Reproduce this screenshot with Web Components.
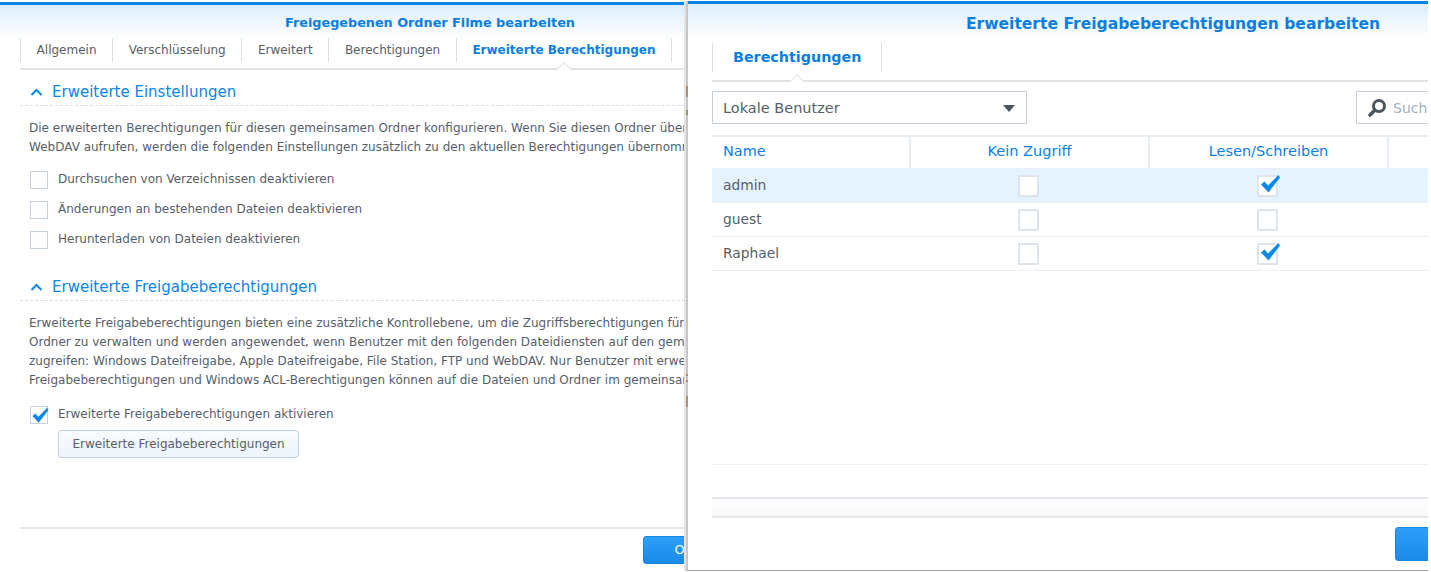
<!DOCTYPE html>
<html lang="de">
<head>
<meta charset="utf-8">
<title>Freigabeberechtigungen</title>
<style>
  html, body { margin: 0; height: 100%; background: #fff; overflow: hidden; }
  body { font: 12px/19px "DejaVu Sans", sans-serif; color: #56606a; }
</style>
</head>
<body>

<dsm-desktop>
  <dsm-window style="--left:0px;--top:2px;--width:860px;--height:570px;--pad:20px;--title-size:12.8px;--title-h:36px;--edge:0px;--title-line:36px;--bottom:0px;--ring:0px" caption="Freigegebenen Ordner Filme bearbeiten">
    <dsm-tabs>
      <dsm-tab>Allgemein</dsm-tab>
      <dsm-tab>Verschlüsselung</dsm-tab>
      <dsm-tab>Erweitert</dsm-tab>
      <dsm-tab>Berechtigungen</dsm-tab>
      <dsm-tab active>Erweiterte Berechtigungen</dsm-tab>
    </dsm-tabs>
    <dsm-section caption="Erweiterte Einstellungen" style="--section-top:9px;--text-gap:8px">
      <p>Die erweiterten Berechtigungen für diesen gemeinsamen Ordner konfigurieren. Wenn Sie diesen Ordner über File Station, FTP oder<br>WebDAV aufrufen, werden die folgenden Einstellungen zusätzlich zu den aktuellen Berechtigungen übernommen.</p>
      <dsm-check>Durchsuchen von Verzeichnissen deaktivieren</dsm-check>
      <dsm-check>Änderungen an bestehenden Dateien deaktivieren</dsm-check>
      <dsm-check>Herunterladen von Dateien deaktivieren</dsm-check>
    </dsm-section>
    <dsm-section caption="Erweiterte Freigabeberechtigungen" style="--section-top:19px;--text-gap:10px">
      <p>Erweiterte Freigabeberechtigungen bieten eine zusätzliche Kontrollebene, um die Zugriffsberechtigungen für<br>Ordner zu verwalten und werden angewendet, wenn Benutzer mit den folgenden Dateidiensten auf den gemeinsamen<br>zugreifen: Windows Dateifreigabe, Apple Dateifreigabe, File Station, FTP und WebDAV. Nur Benutzer mit erweiterten<br>Freigabeberechtigungen und Windows ACL-Berechtigungen können auf die Dateien und Ordner im gemeinsamen</p>
      <dsm-check checked>Erweiterte Freigabeberechtigungen aktivieren</dsm-check>
      <dsm-button>Erweiterte Freigabeberechtigungen</dsm-button>
    </dsm-section>
    <dsm-footer slot="footer" style="--footer-left:643px;--bar-h:43px;--bar-pad:7px;--ok-h:28px;--ok-w:82px">OK</dsm-footer>
  </dsm-window>

  <dsm-window style="--left:686px;--top:1px;--width:972px;--height:570px;--pad:24px;--title-size:15.55px;--title-h:37px;--edge:2px;--title-line:40px;--bottom:1px;--ring:2px" caption="Erweiterte Freigabeberechtigungen bearbeiten">
    <dsm-tabs large>
      <dsm-tab active>Berechtigungen</dsm-tab>
    </dsm-tabs>
    <dsm-toolbar>
      <dsm-select>Lokale Benutzer</dsm-select>
      <dsm-search>Suchen</dsm-search>
    </dsm-toolbar>
    <dsm-grid>
      <dsm-row head><span>Name</span><span>Kein Zugriff</span><span>Lesen/Schreiben</span><span></span></dsm-row>
      <dsm-row selected><span>admin</span><dsm-box></dsm-box><dsm-box checked></dsm-box><span></span></dsm-row>
      <dsm-row><span>guest</span><dsm-box></dsm-box><dsm-box></dsm-box><span></span></dsm-row>
      <dsm-row><span>Raphael</span><dsm-box></dsm-box><dsm-box checked></dsm-box><span></span></dsm-row>
    </dsm-grid>
    <dsm-pager></dsm-pager>
    <dsm-footer slot="footer" style="--footer-left:707px;--bar-h:52px;--bar-pad:9px;--ok-h:34px;--ok-w:92px">OK</dsm-footer>
  </dsm-window>

  <!-- bits of the wallpaper showing through the gap between the windows -->
  <dsm-speck style="--y:86px;--h:11px"></dsm-speck>
  <dsm-speck style="--y:110px;--h:5px;--c:#9b8f7c"></dsm-speck>
  <dsm-speck style="--y:374px;--h:2px"></dsm-speck>
  <dsm-speck style="--y:380px;--h:2px"></dsm-speck>
  <dsm-speck style="--y:396px;--h:11px"></dsm-speck>
</dsm-desktop>

<script>
  const CHECK_MARK = `<svg viewBox="0 0 22 20" width="100%" height="100%"><path d="M2 10.5 L5.5 7.5 L9 11.5 L19.5 1 L21 3.5 L9.5 18.5 Z" fill="#0a8ae8"/></svg>`;

  function define(name, css, html) {
    customElements.define(name, class extends HTMLElement {
      connectedCallback() {
        if (this.shadowRoot) return;
        this.attachShadow({ mode: "open" });
        this.shadowRoot.innerHTML = `<style>${css}</style>${typeof html === "function" ? html(this) : html}`;
      }
    });
  }

  define("dsm-desktop", `
    :host { display: block; position: relative; width: 1428px; height: 572px; overflow: hidden; background: #fff; }
  `, `<slot></slot>`);

  define("dsm-speck", `
    :host { position: absolute; left: 686px; top: var(--y); width: 2px; height: var(--h); background: var(--c, #b08f75); }
  `, ``);

  // overlapping windows, place is the content here
  define("dsm-window", `
    :host {
      display: flex; flex-direction: column; box-sizing: border-box;
      position: absolute; left: var(--left); top: var(--top);
      width: var(--width); height: var(--height);
      background: #fff;
      border-left: var(--edge) solid #c6c6c6;
      border-bottom: var(--bottom) solid #a8a8a8;
      box-shadow: calc(var(--ring) * -1) 0 0 #e4e4e4;
    }
    .top {
      flex: none; box-sizing: border-box; height: var(--title-h);
      border-top: 3px solid #0a84e6;
      background: linear-gradient(#dcedfb, #fff);
      text-align: center;
      font-weight: bold; font-size: var(--title-size); line-height: var(--title-line); color: #0a7fe0;
    }
    .body { flex: 1; min-height: 0; padding: 0 var(--pad); white-space: nowrap; overflow: hidden; }
  `, el => `
    <div class="top">${el.getAttribute("caption")}</div>
    <div class="body"><slot></slot></div>
    <slot name="footer"></slot>
  `);

  define("dsm-tabs", `
    :host { display: flex; box-sizing: border-box; height: 32px; padding-bottom: 6px; border-bottom: 2px solid #e3e3e3; --tab-pad: 15.6px; --tip-top: 2px; }
    :host([large]) { height: 44px; padding: 5px 0 8px; font-size: 14.3px; --tab-pad: 20px; --tip-top: 4px; }
  `, `<slot></slot>`);

  define("dsm-tab", `
    :host {
      display: flex; align-items: center; position: relative; box-sizing: border-box;
      padding: 0 var(--tab-pad);
      color: #56606a;
      border-left: 1px solid #d7e0e9;
    }
    :host(:last-child) { border-right: 1px solid #d7e0e9; }
    :host([active]) { color: #0a7fe0; font-weight: bold; }
    .tip { display: none; position: absolute; left: 50%; top: calc(100% + var(--tip-top)); width: 9px; height: 9px; margin-left: -5px;
      background: #fff; border: solid #e3e3e3; border-width: 1px 0 0 1px; transform: rotate(45deg); }
    :host([active]) .tip { display: block; }
  `, `<slot></slot><i class="tip"></i>`);

  define("dsm-section", `
    :host { display: block; padding-top: var(--section-top, 10px); }
    .head { display: flex; align-items: center; gap: 9px; height: 26px; border-bottom: 1px dashed #d7dfe7;
      padding-left: 10px; font-size: 15px; color: #0a86e8; }
    .body { padding: 13px 0 0 9px; }
    ::slotted(p) { margin: 0 0 var(--text-gap); }
  `, el => `
    <div class="head"><svg width="13" height="8" viewBox="0 0 13 8"><path d="M1.5 7 L6.5 2 L11.5 7" fill="none" stroke="#0a86e8" stroke-width="2"/></svg>${el.getAttribute("caption")}</div>
    <div class="body"><slot></slot></div>
  `);

  define("dsm-box", `
    :host { display: flex; align-items: center; justify-content: center; padding-top: 1px; }
    .b { position: relative; box-sizing: border-box; width: 21px; height: 22px; border: 2px solid #dde4eb; background: #fff; }
    svg { position: absolute; left: 0; top: -3px; width: 22px; height: 20px; }
  `, el => `<div class="b">${el.hasAttribute("checked") ? CHECK_MARK : ""}</div>`);

  define("dsm-check", `
    :host { display: flex; align-items: center; gap: 10px; height: 30px; margin-left: 1px; }
    .b { position: relative; box-sizing: border-box; width: 18px; height: 18px; border: 1px solid #c6d3df; background: #fff; flex: none; }
    svg { position: absolute; left: -1px; top: 0; width: 20px; height: 17px; }
    span { margin-top: -2px; }
  `, el => `<div class="b">${el.hasAttribute("checked") ? CHECK_MARK : ""}</div><span><slot></slot></span>`);

  define("dsm-button", `
    :host { display: inline-block; margin: 0 0 0 29px; padding: 0 13.5px; height: 28px; line-height: 26px; box-sizing: border-box;
      border: 1px solid #c5d0dc; border-radius: 3px; background: linear-gradient(#f8fbfe, #eef4fb); }
  `, `<slot></slot>`);

  define("dsm-footer", `
    :host { display: block; flex: none; }
    .line { height: 2px; background: #e6e6e6; margin: 0 var(--pad); }
    .bar { height: var(--bar-h); padding: var(--bar-pad) 0 0 var(--footer-left); box-sizing: border-box; }
    .ok { width: var(--ok-w); height: var(--ok-h); box-sizing: border-box; border: 1px solid #1a85e0; border-radius: 3px;
      background: linear-gradient(#2d9ffa, #1a8be8); color: #fff; text-align: center; line-height: calc(var(--ok-h) - 2px); font-size: 13px; }
  `, `<div class="line"></div><div class="bar"><div class="ok"><slot></slot></div></div>`);

  define("dsm-toolbar", `
    :host { display: flex; justify-content: space-between; margin-top: 9px; width: 716px; height: 33px; }
  `, `<slot></slot>`);

  define("dsm-select", `
    :host { display: flex; align-items: center; justify-content: space-between; box-sizing: border-box; width: 315px;
      border: 1px solid #c5d0dc; padding: 1px 10px 0; font-size: 14.5px; }
    i { width: 0; height: 0; border: 6.5px solid transparent; border-top: 7px solid #4c555e; border-bottom: 0; margin-right: 1px; }
  `, `<slot></slot><i></i>`);

  define("dsm-search", `
    :host { display: flex; align-items: center; gap: 6px; box-sizing: border-box; width: 72px; padding: 1px 0 0 10px;
      border: 1px solid #c5d0dc; border-right: 0; color: #a3b0bd; font-size: 14px; overflow: hidden; white-space: nowrap; }
    svg { flex: none; }
  `, `<svg width="20" height="20" viewBox="0 0 20 20"><circle cx="12" cy="8" r="5.5" fill="none" stroke="#4c555e" stroke-width="3"/><path d="M8 12 L3 17" stroke="#4c555e" stroke-width="3.6" stroke-linecap="round"/></svg><slot></slot>`);

  define("dsm-grid", `
    :host { display: block; margin-top: 11px; border-top: 2px solid #e8eef4; }
  `, `<slot></slot>`);

  define("dsm-row", `
    :host { display: grid; grid-template-columns: 197px 239px 239px 239px; height: 34px; align-items: center;
      box-sizing: border-box; border-bottom: 1px solid #e8eef4; font-size: 13.8px; }
    :host([head]) { height: 32px; color: #0a7fe0; font-size: 14.5px; align-items: stretch; line-height: 29px; }
    :host([head]) ::slotted(span) { border-left: 2px solid #e8eef4; text-align: center; padding-left: 0; }
    :host([head]) ::slotted(span:first-child) { border-left: 0; text-align: left; padding-left: 11px; }
    :host([selected]) { background: #e4f3fe; }
    ::slotted(span) { padding-left: 11px; }
  `, `<slot></slot>`);

  define("dsm-pager", `
    :host { display: block; margin-top: 193px; border-top: 1px solid #eceff3; }
    div { margin-top: 32px; height: 18px; border-top: 2px solid #e3e8ee; background: linear-gradient(#fff, #f7f7f7); }
  `, `<div></div>`);
</script>
</body>
</html>
